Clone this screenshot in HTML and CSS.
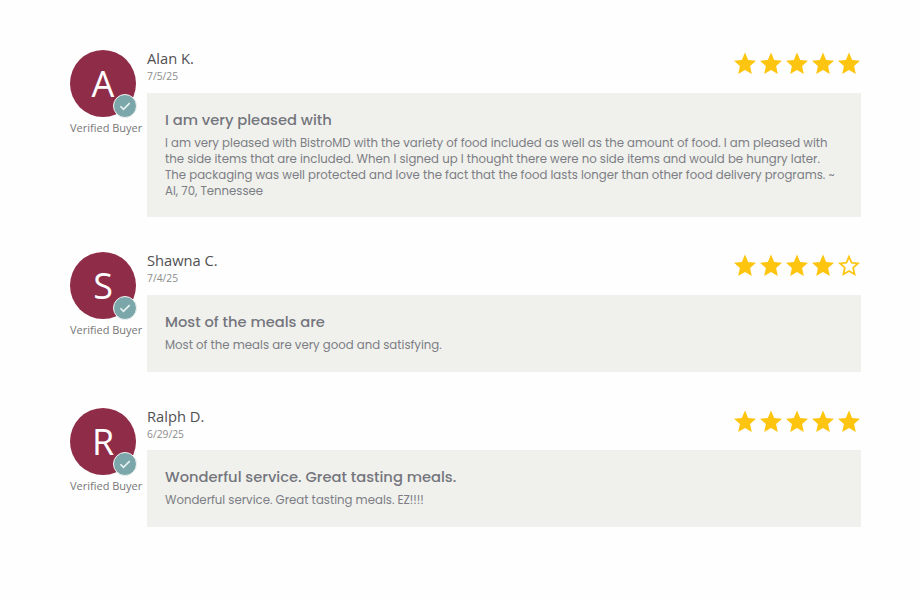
FILE: index.html
```html
<!DOCTYPE html>
<html lang="en">

<head>
    <meta charset="UTF-8">
    <title>Customer Reviews</title>
    <link rel="stylesheet" href="styles.css">
</head>

<body>
    <!-- shared icons -->
    <svg class="sprite" width="0" height="0">
        <symbol id="star" viewBox="0 0 24 24">
            <path d="M12 .6l3.2 7.5 7.8.7-5.9 5.3 1.7 8L12 18.1l-6.8 4 1.7-8L1 8.8l7.8-.7z" />
        </symbol>
        <symbol id="star-empty" viewBox="0 0 24 24">
            <path fill-rule="evenodd" d="M12 .6l3.2 7.5 7.8.7-5.9 5.3 1.7 8L12 18.1l-6.8 4 1.7-8L1 8.8l7.8-.7zM12 4.9l-2 4.7-4.9.5 3.7 3.4-1 5.1 4.2-2.6 4.2 2.6-1-5.1 3.7-3.4-4.9-.5z" />
        </symbol>
        <symbol id="check" viewBox="0 0 24 24">
            <path d="M7 12.3l3.3 3.3 6.8-6.8" fill="none" stroke="#e8f2f2" stroke-width="1.8" />
        </symbol>
    </svg>

    <div class="reviews">
        <div class="review">
            <div class="buyer">
                <div class="avatar">A<svg class="badge"><use href="#check" /></svg></div>
                <div class="verified">Verified Buyer</div>
            </div>
            <div class="content">
                <div class="header">
                    <div>
                        <div class="name">Alan K.</div>
                        <div class="date">7/5/25</div>
                    </div>
                    <div class="stars">
                        <svg><use href="#star" /></svg>
                        <svg><use href="#star" /></svg>
                        <svg><use href="#star" /></svg>
                        <svg><use href="#star" /></svg>
                        <svg><use href="#star" /></svg>
                    </div>
                </div>
                <div class="box">
                    <h3>I am very pleased with</h3>
                    <p>I am very pleased with BistroMD with the variety of food included as well as the amount of food. I am pleased with<br>
                        the side items that are included. When I signed up I thought there were no side items and would be hungry later.<br>
                        The packaging was well protected and love the fact that the food lasts longer than other food delivery programs. ~<br>
                        Al, 70, Tennessee</p>
                </div>
            </div>
        </div>

        <div class="review">
            <div class="buyer">
                <div class="avatar">S<svg class="badge"><use href="#check" /></svg></div>
                <div class="verified">Verified Buyer</div>
            </div>
            <div class="content">
                <div class="header">
                    <div>
                        <div class="name">Shawna C.</div>
                        <div class="date">7/4/25</div>
                    </div>
                    <div class="stars">
                        <svg><use href="#star" /></svg>
                        <svg><use href="#star" /></svg>
                        <svg><use href="#star" /></svg>
                        <svg><use href="#star" /></svg>
                        <svg><use href="#star-empty" /></svg>
                    </div>
                </div>
                <div class="box">
                    <h3>Most of the meals are</h3>
                    <p>Most of the meals are very good and satisfying.</p>
                </div>
            </div>
        </div>

        <div class="review">
            <div class="buyer">
                <div class="avatar">R<svg class="badge"><use href="#check" /></svg></div>
                <div class="verified">Verified Buyer</div>
            </div>
            <div class="content">
                <div class="header">
                    <div>
                        <div class="name">Ralph D.</div>
                        <div class="date">6/29/25</div>
                    </div>
                    <div class="stars">
                        <svg><use href="#star" /></svg>
                        <svg><use href="#star" /></svg>
                        <svg><use href="#star" /></svg>
                        <svg><use href="#star" /></svg>
                        <svg><use href="#star" /></svg>
                    </div>
                </div>
                <div class="box">
                    <h3>Wonderful service. Great tasting meals.</h3>
                    <p>Wonderful service. Great tasting meals. EZ!!!!</p>
                </div>
            </div>
        </div>
    </div>
</body>

</html>
```

FILE: styles.css
```css
body {
    margin: 0;
    background-color: #fefefe;
    font-family: 'Open Sans', sans-serif;
}

.sprite {
    display: block;
}

.reviews {
    display: flex;
    flex-direction: column;
    gap: 35.5px;
    width: 791px;
    padding: 50px 0 0 70px;
}

.review {
    display: flex;
}

.buyer {
    width: 77px;
    flex-shrink: 0;
}

.avatar {
    position: relative;
    width: 66px;
    height: 67px;
    border-radius: 50%;
    background-color: #8f2c48;
    color: #fff;
    font-size: 36px;
    line-height: 68px;
    text-align: center;
}

.badge {
    position: absolute;
    right: -1px;
    bottom: -1px;
    width: 22px;
    height: 22px;
    border: 1.5px solid #f3f3f3;
    border-radius: 50%;
    background-color: #7ba7aa;
}

.verified {
    margin-top: 4px;
    color: #777;
    font-size: 11px;
    line-height: 14px;
    white-space: nowrap;
}

.content {
    flex: 1;
}

.header {
    display: flex;
    justify-content: space-between;
    height: 42.8px;
}

.name {
    color: #505052;
    font-size: 14.7px;
    line-height: 17px;
}

.date {
    color: #8c8c8c;
    font-size: 10.3px;
    line-height: 18px;
}

.stars {
    display: flex;
    gap: 2px;
    margin-top: 2px;
}

.stars svg {
    width: 24px;
    height: 24px;
    fill: #fdc50f;
}

.box {
    box-sizing: border-box;
    min-height: 77px;
    padding: 17px 18px 18px;
    background-color: #f0f1ec;
    font-family: Poppins, Inter, sans-serif;
    white-space: nowrap;
}

.box h3 {
    margin: 0 0 5px;
    color: #74757d;
    font-size: 14.7px;
    font-weight: 500;
    line-height: 20px;
}

.box p {
    margin: 0;
    color: #7c7d85;
    font-size: 11.73px;
    line-height: 16px;
}
```
